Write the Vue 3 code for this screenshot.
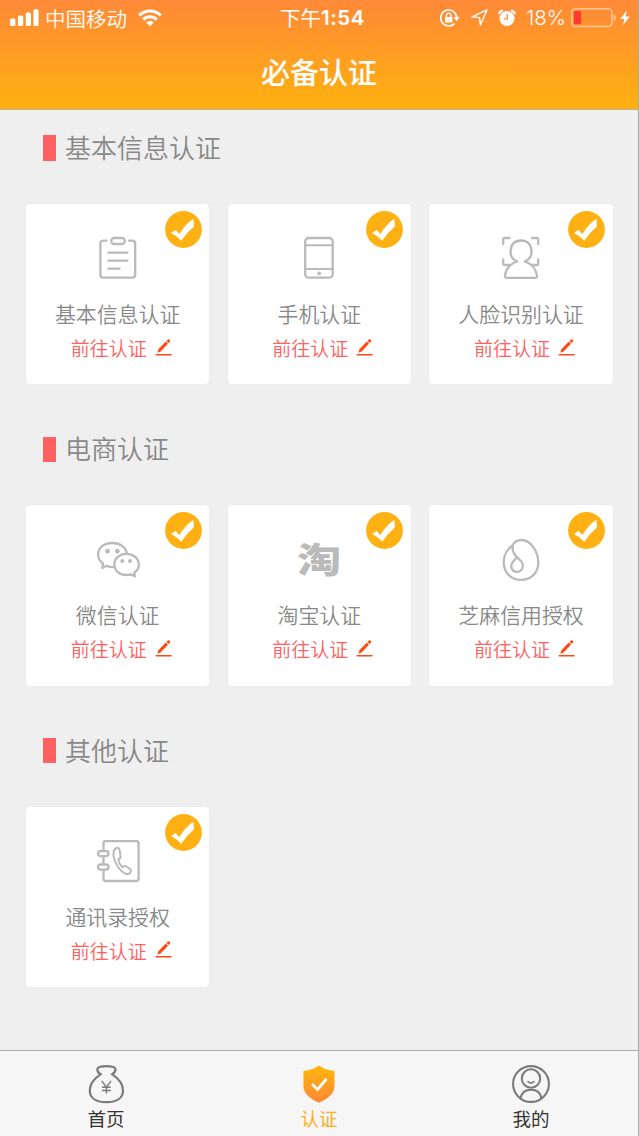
<template>
  <div class="page">
    <header class="header">
      <div class="status">
        <div class="status-left">
          <svg class="signal" viewBox="0 0 29 18" width="29" height="18" fill="#fff">
            <rect x="0" y="9.5" width="5.4" height="7.5" rx="1.6" />
            <rect x="8" y="6.5" width="5.2" height="10.5" rx="1.6" />
            <rect x="15.8" y="3.5" width="5.2" height="13.5" rx="1.6" />
            <rect x="23.4" y="0.3" width="5.2" height="16.7" rx="1.6" />
          </svg>
          <span class="carrier">中国移动</span>
          <svg class="wifi" viewBox="0 0 24 18" width="24" height="18" fill="none" stroke="#fff">
            <path d="M1.2 6.4A15.4 15.4 0 0 1 22.8 6.4" stroke-width="3.2" />
            <path d="M5.2 10.6A9.8 9.8 0 0 1 18.8 10.6" stroke-width="3" />
            <path d="M8.2 13.4Q12 10.2 15.8 13.4L12 17.3Z" fill="#fff" stroke="none" />
          </svg>
        </div>
        <div class="time">下午<b>1:54</b></div>
        <div class="status-right">
          <svg class="lock" viewBox="0 0 20 18" width="20" height="18" fill="none" stroke="#fff" stroke-width="1.6">
            <path d="M14.4 14.6A8 8 0 1 1 16.7 8.5" />
            <path d="M13.6 8h6l-3 4.2z" fill="#fff" stroke="none" />
            <rect x="5" y="8" width="7.4" height="5.4" rx="0.6" fill="#fff" stroke="none" />
            <path d="M6.5 8.3V6.4a2.2 2.2 0 0 1 4.4 0v1.9" stroke-width="1.3" />
          </svg>
          <svg class="arrow" viewBox="0 0 17 17" width="17" height="17" fill="none" stroke="#fff" stroke-width="1.4">
            <path d="M16 0.9L1 7.9L8.5 8.6L9.4 15.8Z" stroke-linejoin="round" />
          </svg>
          <svg class="alarm" viewBox="0 0 18 18" width="18" height="18">
            <circle cx="9" cy="9.5" r="7.5" fill="#fff" />
            <path d="M1 5.2Q1.5 2 5 1.4M17 5.2Q16.5 2 13 1.4" fill="none" stroke="#fff" stroke-width="2" />
            <path d="M9.3 5.2V9.9H5.7" fill="none" stroke="#fe9132" stroke-width="1.4" />
          </svg>
          <span class="percent">18%</span>
          <svg class="battery" viewBox="0 0 46 20" width="46" height="20">
            <rect x="0.8" y="0.8" width="40" height="17.8" rx="3.5" fill="none" stroke="#ffc795" stroke-width="1.5" />
            <rect x="3" y="3" width="7" height="13.3" rx="1" fill="#ff3b30" />
            <path d="M42.5 6.5Q45 7 45 9.7T42.5 13Z" fill="#ffc795" />
          </svg>
          <svg class="bolt" viewBox="0 0 10 16" width="10" height="16" fill="#fff">
            <path d="M6.8 0.5L0.2 9H4.3L2.8 15.5L9.8 6.4H5.6Z" />
          </svg>
        </div>
      </div>
      <h1>必备认证</h1>
    </header>

    <main class="content">
      <section v-for="section in sections" :key="section.title">
        <h2><span>{{ section.title }}</span></h2>
        <div class="cards">
          <div v-for="item in section.items" :key="item.label" class="card">
            <svg class="badge" viewBox="0 0 37 37">
              <circle cx="18.5" cy="18.5" r="18.4" fill="#ffb012" />
              <path d="M6 22L10.6 18.9L14.4 23Q20 13.5 28.4 7.8L28.9 15.5Q21.5 21.5 16.3 29.8Q11.5 24.5 6 22Z" fill="#fff" />
            </svg>
            <span v-if="item.icon === 'taobao'" class="icon taobao">淘</span>
            <svg v-else class="icon" viewBox="0 0 44 44">
              <g v-if="item.icon === 'form'">
                <path d="M10.5 4.7H7.2Q4.4 4.7 4.4 7.5V39Q4.4 41.6 7.2 41.6H36.2Q39.2 41.6 39.2 39V7.5Q39.2 4.7 36.4 4.7H33" />
                <rect x="15.3" y="2" width="13.5" height="6" rx="3" />
                <path d="M12.3 16.7H31.5M12.3 24.7H31.5M12.3 32.7H23.5" />
              </g>
              <g v-else-if="item.icon === 'phone'">
                <rect x="8.2" y="2" width="27.5" height="39.7" rx="3.8" />
                <path d="M8.2 9.2H35.7M8.2 33H35.7" stroke-width="2" />
                <circle cx="22.2" cy="37.4" r="1.9" class="dot" />
              </g>
              <g v-else-if="item.icon === 'face'">
                <path d="M4.2 8V3.5Q4.2 2 5.7 2H10.5M33 2H37.5Q39.2 2 39.2 3.5V8M4.2 23.5V27.5Q4.2 29 5.7 29H10.5M33 29H37.5Q39.2 29 39.2 27.5V23.5" />
                <path d="M18 25.5C13.5 23.5 11.5 19.5 11.5 15.5C11.5 8.5 15.8 4.5 22 4.5S32.5 8.5 32.5 15.5C32.5 19.5 30.5 23.5 26 25.5" />
                <path d="M18 25.5C11 28 7 33 6 39.5Q5.5 41.8 8 41.8H36Q38.5 41.8 38 39.5C37 33 33 28 26 25.5" />
              </g>
              <g v-else-if="item.icon === 'wechat'">
                <path d="M18.5 29.7Q14 30.7 10.5 28.7L6.3 31L6.9 26.5C3.5 24 2.1 20.7 2.1 17.5C2.1 10.5 8.2 6 16.2 6C24 6 30 10.2 30.8 16.5" />
                <path d="M30.5 16.8C23.5 16.8 18.3 21.5 18.3 27.6C18.3 33.7 23.5 38 30.5 38Q33 38 35 37.4L38.8 39.3L38.3 35.5C41.2 33.7 42.8 31 42.8 27.7C42.8 21.5 37.5 16.8 30.5 16.8Z" />
                <circle cx="11.5" cy="14.2" r="2.4" class="dot" />
                <circle cx="21.3" cy="14.2" r="2.4" class="dot" />
                <circle cx="26.3" cy="24" r="2" class="dot" />
                <circle cx="34" cy="24" r="2" class="dot" />
              </g>
              <g v-else-if="item.icon === 'sesame'">
                <path d="M22.5 3C32 3 39.3 15 39.3 25.5C39.3 36 32 42.8 22 42.8C11 42.8 4.7 34.5 4.7 25C4.7 18.5 8.5 12 13.5 8.5C15.5 4.5 19 3 22.5 3Z" />
                <path d="M13.7 8.5C12.5 17 18 20 21.5 23.5C24.5 26.5 24.5 29 23 32C20.5 36.2 14.5 35.7 12.7 31.5C10.5 26 15.5 24.5 17.7 20" />
              </g>
              <g v-else>
                <path d="M7.5 10V4.3Q7.5 2.2 9.8 2.2H40.3Q42.6 2.2 42.6 4.3V39.7Q42.6 42 40.3 42H9.8Q7.5 42 7.5 39.7V31.5M7.5 18V24" />
                <rect x="2" y="12" width="10.5" height="5.2" rx="2.6" />
                <rect x="2" y="25.5" width="10.5" height="5.2" rx="2.6" />
                <path d="M19.5 9.5Q17 12 17.5 16.5C18.3 23.5 23.5 32 29.5 34.7C32.5 36 34.5 34 34.9 32Q35 30.8 34 30L30.5 27.5Q29 26.6 27.6 27.5L26.7 28.2Q22.5 24.5 22.5 20Q24.8 19.5 24.5 17.3L23.7 11.5Q23 7.5 19.5 9.5Z" stroke-width="2" />
              </g>
            </svg>
            <div class="label">{{ item.label }}</div>
            <a class="action">
              前往认证
              <svg viewBox="0 0 17 17" width="17" height="17">
                <path d="M1.3 15.8H16" stroke="#ff4a12" stroke-width="1.6" stroke-linecap="round" />
                <path d="M3.4 10.2L10.8 2.6L13 4.8L5.6 12.4L2.4 13.7ZM11.5 2L12.8 0.6Q14 0 14.8 0.8Q15.5 1.6 15 2.7L13.7 4.1Z" fill="#ff4a12" />
              </svg>
            </a>
          </div>
        </div>
      </section>
    </main>

    <nav class="tabs">
      <a class="tab">
        <svg viewBox="0 0 38 40" fill="none" stroke="#7b7b7b" stroke-width="2.2">
          <path d="M13.5 10.3Q9.8 8 10.4 5Q11 2.2 19.4 2.2T28.4 5Q29 8 25.3 10.3Q36 17.5 36 26.5C36 34.5 29 38.2 19.4 38.2S2.8 34.5 2.8 26.5Q2.8 17.5 13.5 10.3Z" />
          <path d="M14.7 16.8L19.4 23.2L24.1 16.8M19.4 23.2V29.5M15 23.3H23.8M15 26.5H23.8" stroke-width="1.4" />
        </svg>
        首页
      </a>
      <a class="tab active">
        <svg viewBox="0 0 38 40">
          <defs>
            <linearGradient id="shield" x1="0" y1="0" x2="0" y2="1">
              <stop offset="0" stop-color="#ffb60c" />
              <stop offset="1" stop-color="#ff8836" />
            </linearGradient>
          </defs>
          <path d="M19 1.5Q25.5 6 34.5 7V22Q34.5 32 19 38.8Q3.5 32 3.5 22V7Q12.5 6 19 1.5Z" fill="url(#shield)" />
          <path d="M12 20L17.5 25.5L26.5 15" fill="none" stroke="#fff" stroke-width="2.8" />
        </svg>
        认证
      </a>
      <a class="tab">
        <svg viewBox="0 0 38 40" fill="none" stroke="#7b7b7b" stroke-width="2.1">
          <circle cx="19" cy="20" r="17.9" />
          <circle cx="19" cy="14.5" r="9.2" />
          <path d="M8.5 34.3Q10 25.7 19 25.7T29.5 34.3" />
          <path d="M15.5 17.3Q19 20.8 22.5 17.3" stroke-width="1.6" />
        </svg>
        我的
      </a>
    </nav>
  </div>
</template>

<script setup>
  const sections = [
    {
      title: '基本信息认证',
      items: [
        { icon: 'form', label: '基本信息认证' },
        { icon: 'phone', label: '手机认证' },
        { icon: 'face', label: '人脸识别认证' },
      ],
    },
    {
      title: '电商认证',
      items: [
        { icon: 'wechat', label: '微信认证' },
        { icon: 'taobao', label: '淘宝认证' },
        { icon: 'sesame', label: '芝麻信用授权' },
      ],
    },
    {
      title: '其他认证',
      items: [
        { icon: 'contacts', label: '通讯录授权' },
      ],
    },
  ]
</script>

<style>
  body {
    margin: 0;
  }
</style>

<style scoped>
  .page {
    box-sizing: border-box;
    display: flex;
    flex-direction: column;
    height: 1136px;
    border-right: 1px solid #a9a9a9;
    background: #efefef;
    font-family: "Noto Sans CJK SC", sans-serif;
    font-weight: 350;
  }

  .header {
    box-sizing: border-box;
    height: 110px;
    border-bottom: 1px solid #b5ae98;
    background: linear-gradient(#ff8938, #ffb10f);
    color: #fff;
  }

  .status {
    display: grid;
    grid-template-columns: 1fr auto 1fr;
    height: 35px;
    padding: 0 8px 0 10px;
    font-size: 20.5px;
    line-height: 34px;
  }

  .status-left,
  .status-right {
    display: flex;
    align-items: center;
  }

  .status-right {
    justify-content: flex-end;
  }

  .carrier {
    margin: 0 11px 0 6px;
  }

  .time {
    display: flex;
    font-weight: 400;
    margin-left: 5px;
  }

  .time b {
    padding-top: 1px;
    font-family: Inter, sans-serif;
    font-weight: 600;
    letter-spacing: 0.5px;
  }

  .arrow {
    margin: 0 10px 0 11px;
  }

  .percent {
    margin: 0 5px 0 10px;
    font-family: Inter, sans-serif;
    font-size: 20.5px;
  }

  .bolt {
    margin-left: 3px;
  }

  h1 {
    margin: 0;
    font-size: 29px;
    font-weight: 500;
    line-height: 72px;
    text-align: center;
  }

  .content {
    flex: 1;
    padding: 0 26px;
  }

  section {
    height: 301.3px;
  }

  h2 {
    display: flex;
    align-items: center;
    height: 26px;
    margin: 0 0 0 16.5px;
    padding: 25px 0 43px;
    color: #888;
    font-size: 26px;
    font-weight: 350;
  }

  h2 span {
    padding-bottom: 2px;
    line-height: 26px;
  }

  h2::before {
    content: "";
    width: 13.5px;
    height: 25.5px;
    margin-right: 9px;
    background: #ff6060;
  }

  .cards {
    display: grid;
    grid-template-columns: repeat(3, 183.3px);
    column-gap: 18.4px;
  }

  .card {
    position: relative;
    display: flex;
    flex-direction: column;
    align-items: center;
    box-sizing: border-box;
    height: 180.4px;
    padding-top: 32px;
    border-radius: 4px;
    background: #fff;
    box-shadow: 0 0 1px #ddd;
  }

  .badge {
    position: absolute;
    top: 7px;
    right: 7.5px;
    width: 37px;
    height: 37px;
  }

  .icon {
    width: 44px;
    height: 44px;
    fill: none;
    stroke: #bababa;
    stroke-width: 2.3;
    stroke-linecap: round;
    stroke-linejoin: round;
  }

  .dot {
    fill: #bababa;
    stroke: none;
  }

  .taobao {
    color: #bababa;
    font-size: 35px;
    font-weight: 900;
    line-height: 42px;
    text-align: center;
    transform: scaleX(1.26);
  }

  .label {
    margin-top: 17px;
    color: #888;
    font-size: 20.9px;
    line-height: 32px;
  }

  .action {
    display: flex;
    align-items: center;
    gap: 8px;
    margin: 4px 0 0 7px;
    color: #ff6060;
    font-size: 19px;
    line-height: 30px;
  }

  .action svg {
    margin-bottom: 2px;
  }

  .tabs {
    display: flex;
    height: 85px;
    padding-right: 1px;
    border-top: 1px solid #adadad;
    background: #f6f6f6;
  }

  .tab {
    display: flex;
    flex: 1;
    flex-direction: column;
    align-items: center;
    color: #333;
    font-size: 18.5px;
    font-weight: 400;
    line-height: 28px;
  }

  .tab svg {
    width: 38px;
    height: 40px;
    margin: 13px 0 0;
  }

  .tab:first-child {
    padding-right: 1px;
  }

  .active {
    color: #ffae14;
  }
</style>
